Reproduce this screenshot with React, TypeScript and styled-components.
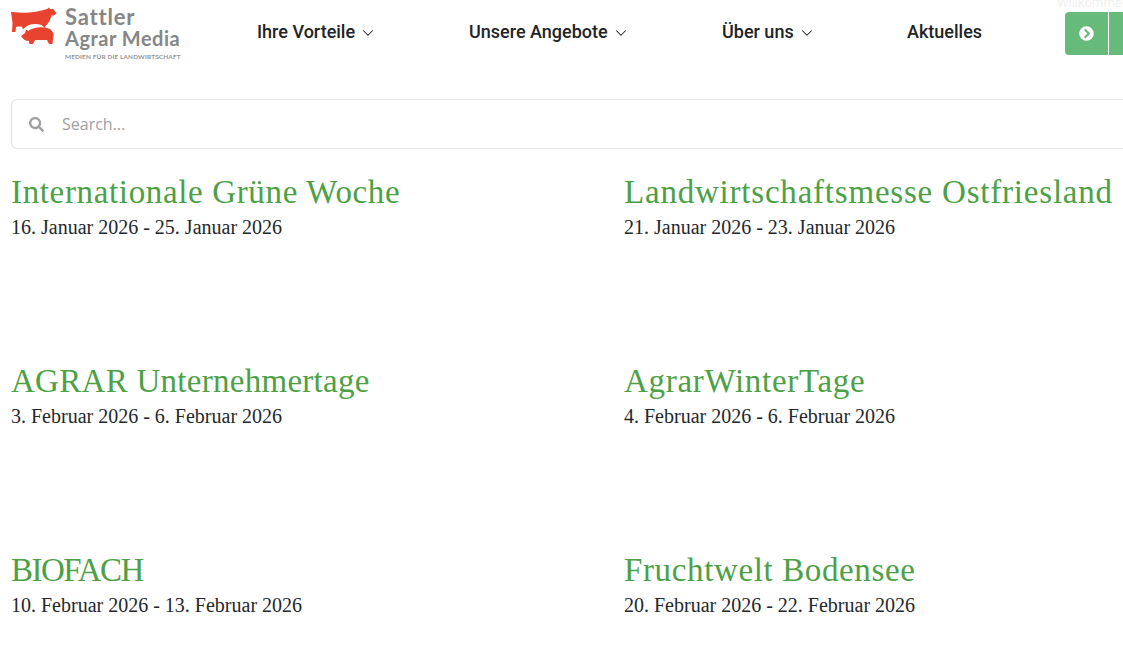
import React, { FC } from 'react';
import styled, { createGlobalStyle } from 'styled-components';
import { FaSearch, FaChevronCircleRight } from 'react-icons/fa';
import { FiChevronDown } from 'react-icons/fi';

const GlobalStyle = createGlobalStyle`
  html, body {
    margin: 0;
    padding: 0;
    background: #fff;
    overflow: hidden;
    height: 648px;
  }
`;

const Page = styled.div`
  width: 1123px;
  height: 648px;
  overflow: hidden;
`;

const Header = styled.header`
  display: flex;
  align-items: flex-start;
  height: 99px;
  padding-left: 11px;
`;

const LogoLink = styled.a`
  display: flex;
  align-items: flex-start;
  width: 171px;
  flex: none;
  padding-top: 6px;
`;

const LogoMark = styled.svg`
  width: 47px;
  height: 39px;
  flex: none;
  margin-top: 1px;
`;

const LogoText = styled.div`
  display: flex;
  flex-direction: column;
  margin-left: 7px;
  color: #868686;
  font-family: Lato, sans-serif;
  white-space: nowrap;
`;

const LogoName = styled.span<{ $size: number; $tracking: number }>`
  font-size: ${({ $size }) => $size}px;
  letter-spacing: ${({ $tracking }) => $tracking}px;
  line-height: 21.5px;
  font-weight: 700;
`;

const LogoTagline = styled.span`
  font-size: 6.4px;
  line-height: 9px;
  margin-top: 3px;
  font-weight: 700;
  letter-spacing: 0.16px;
  color: #939393;
`;

const Nav = styled.nav`
  display: flex;
  align-items: center;
  height: 23px;
  margin-top: 20px;
  margin-left: 75px;
`;

const NavItem = styled.a<{ $width: number }>`
  display: flex;
  align-items: center;
  width: ${({ $width }) => $width}px;
  flex: none;
  color: #212326;
  font-family: Roboto, sans-serif;
  font-size: 18px;
  font-weight: 500;
  white-space: nowrap;

  svg {
    margin-left: 4px;
    margin-top: 2px;
    font-size: 18px;
    stroke-width: 1.4;
  }
`;

const CtaWrap = styled.div`
  position: relative;
  flex: none;
  margin-top: 12px;
`;

const WelcomeHint = styled.span`
  position: absolute;
  left: -8px;
  top: -17px;
  color: #f0f0f0;
  font-family: Roboto, sans-serif;
  font-size: 13px;
  white-space: nowrap;
`;

const CtaButton = styled.div`
  display: flex;
  width: 80px;
  height: 43px;
  border-radius: 4px;
  overflow: hidden;
  background: #66bb7a;
`;

const CtaIcon = styled.div`
  display: flex;
  align-items: center;
  justify-content: center;
  width: 43px;
  flex: none;
  color: #fff;
  font-size: 15px;
  border-right: 1px solid #fff;
`;

const SearchBar = styled.div`
  display: flex;
  align-items: center;
  width: 1200px;
  height: 48px;
  margin-left: 11px;
  border: 1px solid #e2e2e2;
  border-radius: 6px;
  color: #a0a0a2;

  svg {
    margin-left: 17px;
    font-size: 15px;
    flex: none;
  }
`;

const SearchText = styled.span`
  margin-left: 18px;
  font-family: 'Open Sans', sans-serif;
  font-size: 16px;
`;

const EventGrid = styled.div`
  display: grid;
  grid-template-columns: 613px 613px;
  grid-auto-rows: 189px;
  padding: 25px 0 0 11px;
`;

const EventCard = styled.article`
  display: flex;
  flex-direction: column;
`;

const EventTitle = styled.h2<{ $tracking: number }>`
  margin: 0;
  color: #4ca145;
  font-family: 'Liberation Serif', serif;
  font-size: 33px;
  letter-spacing: ${({ $tracking }) => $tracking}px;
  line-height: 36px;
  font-weight: 400;
  white-space: nowrap;
`;

const EventDate = styled.p`
  margin: 0;
  color: #23282d;
  font-family: 'Liberation Serif', serif;
  font-size: 20px;
  line-height: 34px;
  white-space: nowrap;
`;

const events = [
  { title: 'Internationale Grüne Woche', date: '16. Januar 2026 - 25. Januar 2026', tracking: 0.65 },
  { title: 'Landwirtschaftsmesse Ostfriesland', date: '21. Januar 2026 - 23. Januar 2026', tracking: 0.79 },
  { title: 'AGRAR Unternehmertage', date: '3. Februar 2026 - 6. Februar 2026', tracking: 0.28 },
  { title: 'AgrarWinterTage', date: '4. Februar 2026 - 6. Februar 2026', tracking: 0.7 },
  { title: 'BIOFACH', date: '10. Februar 2026 - 13. Februar 2026', tracking: -1.5 },
  { title: 'Fruchtwelt Bodensee', date: '20. Februar 2026 - 22. Februar 2026', tracking: 0.63 },
];

const AnimalsMark: FC = () => (
  <LogoMark viewBox="11 7 47 39">
    <path
      fill="#e8432f"
      d="M11 12 L13 12 C20 13 28 13 34 12 C40 11 44 10 47 9 L49 7.5 L50 9 L53 9 L56.5 13 L54 15.5 L51.5 15.5 C50.5 20 48 24 45.5 26 L45 28 L41.5 25 C36 23 30 24 27 26 L23 29 L21.5 26.5 C19 26.5 17.5 26.5 16 27 L15.5 32 L12 32 L12.5 23 Z"
    />
    <path
      fill="#e8432f"
      d="M21 36 L25 33 L26 29.5 L28.5 31 C32 27.5 42 26.5 47 28 C51 29 53.5 32 53.5 35 L52.5 44 L49 44 L47 40 L35 40 L33 44 L29.5 44 L29 41 C25 41 23 39 21 36 Z"
    />
  </LogoMark>
);

const App: FC = () => {
  return (
    <Page>
      <GlobalStyle />
      <Header>
        <LogoLink>
          <AnimalsMark />
          <LogoText>
            <LogoName $size={22} $tracking={0.8}>Sattler</LogoName>
            <LogoName $size={20} $tracking={0.5}>Agrar Media</LogoName>
            <LogoTagline>MEDIEN FÜR DIE LANDWIRTSCHAFT</LogoTagline>
          </LogoText>
        </LogoLink>
        <Nav>
          <NavItem $width={212}>
            Ihre Vorteile <FiChevronDown />
          </NavItem>
          <NavItem $width={253}>
            Unsere Angebote <FiChevronDown />
          </NavItem>
          <NavItem $width={185}>
            Über uns <FiChevronDown />
          </NavItem>
          <NavItem $width={158}>Aktuelles</NavItem>
        </Nav>
        <CtaWrap>
          <WelcomeHint>Willkommen</WelcomeHint>
          <CtaButton>
            <CtaIcon>
              <FaChevronCircleRight />
            </CtaIcon>
          </CtaButton>
        </CtaWrap>
      </Header>
      <SearchBar>
        <FaSearch />
        <SearchText>Search...</SearchText>
      </SearchBar>
      <EventGrid>
        {events.map((event) => (
          <EventCard key={event.title}>
            <EventTitle $tracking={event.tracking}>{event.title}</EventTitle>
            <EventDate>{event.date}</EventDate>
          </EventCard>
        ))}
      </EventGrid>
    </Page>
  );
};

export default App;
